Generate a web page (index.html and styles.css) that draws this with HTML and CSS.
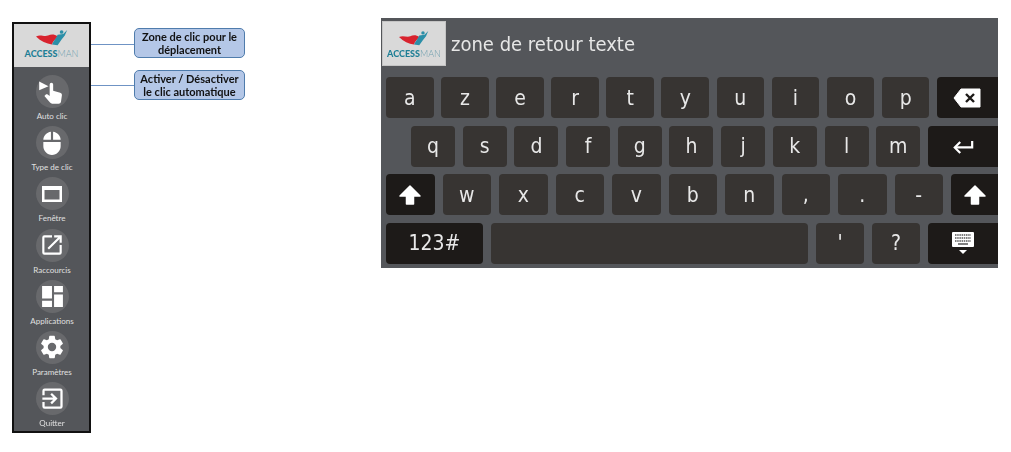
FILE: index.html
```html
<!DOCTYPE html>
<html lang="fr">
<head>
    <meta charset="utf-8">
    <title>AccessMan</title>
    <link rel="stylesheet" href="styles.css">
</head>
<body>
    <div class="page">
        <div class="leftcol">
            <div class="sidebar">
                <div class="sidelogo">
                    <svg class="logomark" viewBox="0 0 40 20" width="32" height="16">
                        <path d="M0 8 C6 5 10 9 15 7 C19 5 23 5 27 8 C24 12 21 14 20 18 C13 17 6 14 0 8Z" fill="#d8232e"/>
                        <path d="M27 6 L34 5 L39 0 L36 7 L32 12 L27 19 L20 18 C22 14 25 11 27 6Z" fill="#2b8fa8"/>
                        <circle cx="32" cy="2.500" r="2.300" fill="#2b8fa8"/>
                    </svg>
                    <div class="logotext"><b>ACCESS</b>MAN</div>
                </div>
                <div class="sideitem">
                    <div class="circle">
                        <svg viewBox="0 0 24 24" width="28" height="28">
                            <path d="M1 3 L9 7 L1 10.500Z" fill="#fff"/>
                            <path d="M10 5.500a1.500 1.500 0 0 1 3 0V11l6 1.600c1.200.4 1.600 1.200 1.500 2.200l-.8 5.500c-.2 1-1 1.700-2 1.700h-5.500c-.8 0-1.400-.3-1.900-.9L5.500 15.500l1-1.100c.5-.5 1.200-.5 1.800-.2L10 15.500Z" fill="#fff"/>
                        </svg>
                    </div>
                    <span>Auto clic</span>
                </div>
                <div class="sideitem">
                    <div class="circle">
                        <svg viewBox="0 0 24 24" width="26" height="26">
                            <path d="M13 1.500c3.900.5 7 3.800 7 7.500h-7zM11 1.500V9H4c0-3.700 3.100-7 7-7.500zM4 11h16v4c0 4.400-3.600 8-8 8s-8-3.600-8-8z" fill="#fff"/>
                        </svg>
                    </div>
                    <span>Type de clic</span>
                </div>
                <div class="sideitem">
                    <div class="circle">
                        <svg viewBox="0 0 24 24" width="24" height="24">
                            <path d="M2 4h20v16H2zM4.500 8v9.500h15V8z" fill="#fff" fill-rule="evenodd"/>
                        </svg>
                    </div>
                    <span>Fenêtre</span>
                </div>
                <div class="sideitem">
                    <div class="circle">
                        <svg viewBox="0 0 24 24" width="26" height="26">
                            <path d="M19 19H5V5h7V3H5a2 2 0 0 0-2 2v14a2 2 0 0 0 2 2h14a2 2 0 0 0 2-2v-7h-2zM14 3v2h3.600l-9.800 9.800 1.400 1.400L19 6.400V10h2V3z" fill="#fff"/>
                        </svg>
                    </div>
                    <span>Raccourcis</span>
                </div>
                <div class="sideitem">
                    <div class="circle">
                        <svg viewBox="0 0 24 24" width="25" height="25">
                            <path d="M2 2h9.500v12H2zM2 16h9.500v6H2zM13.500 2H22v6h-8.500zM13.500 10H22v12h-8.500z" fill="#fff"/>
                        </svg>
                    </div>
                    <span>Applications</span>
                </div>
                <div class="sideitem">
                    <div class="circle">
                        <svg viewBox="0 0 24 24" width="28" height="28">
                            <path d="M19.140 12.940c.04-.3.060-.61.060-.94s-.02-.64-.070-.94l2.030-1.580a.49.490 0 0 0 .12-.61l-1.920-3.320a.49.490 0 0 0-.59-.22l-2.390.96a7 7 0 0 0-1.620-.94l-.36-2.540a.48.480 0 0 0-.48-.41h-3.840a.48.480 0 0 0-.47.410l-.36 2.540c-.59.24-1.130.57-1.620.94l-2.390-.96a.49.490 0 0 0-.59.22L2.740 8.870a.48.480 0 0 0 .12.61l2.030 1.580c-.05.3-.09.63-.09.94s.02.64.070.94l-2.030 1.580a.49.490 0 0 0-.12.61l1.920 3.320c.12.22.37.290.59.220l2.390-.96c.5.380 1.030.7 1.620.94l.36 2.540c.05.240.240.410.480.410h3.840c.240 0 .440-.170.470-.410l.36-2.540c.59-.24 1.130-.56 1.620-.94l2.390.96c.22.080.47 0 .59-.22l1.920-3.320a.48.480 0 0 0-.12-.61zM12 15.600a3.600 3.600 0 1 1 0-7.200 3.600 3.600 0 0 1 0 7.200z" fill="#fff"/>
                        </svg>
                    </div>
                    <span>Paramètres</span>
                </div>
                <div class="sideitem">
                    <div class="circle">
                        <svg viewBox="0 0 24 24" width="27" height="27">
                            <path d="M10.090 15.590 11.500 17l5-5-5-5-1.410 1.410L12.670 11H3v2h9.670zM19 3H5a2 2 0 0 0-2 2v4h2V5h14v14H5v-4H3v4a2 2 0 0 0 2 2h14a2 2 0 0 0 2-2V5a2 2 0 0 0-2-2z" fill="#fff"/>
                        </svg>
                    </div>
                    <span>Quitter</span>
                </div>
            </div>
            <div class="notes">
                <div class="note note1"><i class="line"></i><div class="bubble">Zone de clic pour le déplacement</div></div>
                <div class="note note2"><i class="line"></i><div class="bubble">Activer / Désactiver le clic automatique</div></div>
            </div>
        </div>

        <div class="keyboard">
            <div class="kbtop">
                <div class="toplogo">
                    <svg class="logomark" viewBox="0 0 40 20" width="30" height="15">
                        <path d="M0 8 C6 5 10 9 15 7 C19 5 23 5 27 8 C24 12 21 14 20 18 C13 17 6 14 0 8Z" fill="#d8232e"/>
                        <path d="M27 6 L34 5 L39 0 L36 7 L32 12 L27 19 L20 18 C22 14 25 11 27 6Z" fill="#2b8fa8"/>
                        <circle cx="32" cy="2.500" r="2.300" fill="#2b8fa8"/>
                    </svg>
                    <div class="logotext"><b>ACCESS</b>MAN</div>
                </div>
                <div class="returntext">zone de retour texte</div>
            </div>
            <div class="row row1">
                <div class="key">a</div><div class="key">z</div><div class="key">e</div><div class="key">r</div><div class="key">t</div>
                <div class="key">y</div><div class="key">u</div><div class="key">i</div><div class="key">o</div><div class="key">p</div>
                <div class="key dark grow">
                    <svg viewBox="0 0 28 20" width="28" height="20"><path d="M8 1h19v18H8L1 10z" fill="#fff" stroke="#fff" stroke-linejoin="round"/><path d="M13 6l8 8M21 6l-8 8" stroke="#1d1a18" stroke-width="2.400"/></svg>
                </div>
            </div>
            <div class="row row2">
                <div class="key">q</div><div class="key">s</div><div class="key">d</div><div class="key">f</div><div class="key">g</div>
                <div class="key">h</div><div class="key">j</div><div class="key">k</div><div class="key">l</div><div class="key">m</div>
                <div class="key dark grow">
                    <svg viewBox="0 0 24 16" width="22" height="15"><path d="M22 2v7H4" fill="none" stroke="#fff" stroke-width="2.400"/><path d="M9 3L3 9l6 6" fill="none" stroke="#fff" stroke-width="2.400"/></svg>
                </div>
            </div>
            <div class="row row3">
                <div class="key dark">
                    <svg viewBox="0 0 24 22" width="24" height="22"><path d="M12 2L2 12h6.500v8h7v-8H22z" fill="#fff" stroke="#fff" stroke-width="1.500" stroke-linejoin="round"/></svg>
                </div>
                <div class="key">w</div><div class="key">x</div><div class="key">c</div><div class="key">v</div><div class="key">b</div>
                <div class="key">n</div><div class="key">,</div><div class="key">.</div><div class="key">-</div>
                <div class="key dark grow">
                    <svg viewBox="0 0 24 22" width="24" height="22"><path d="M12 2L2 12h6.500v8h7v-8H22z" fill="#fff" stroke="#fff" stroke-width="1.500" stroke-linejoin="round"/></svg>
                </div>
            </div>
            <div class="row row4">
                <div class="key dark num">123#</div>
                <div class="key space"></div>
                <div class="key">'</div>
                <div class="key">?</div>
                <div class="key dark grow">
                    <svg viewBox="0 0 24 24" width="24" height="24"><path d="M2 1h20a1 1 0 0 1 1 1v13a1 1 0 0 1-1 1H2a1 1 0 0 1-1-1V2a1 1 0 0 1 1-1z" fill="#fff"/><path d="M4 4h16M4 7h16M4 10h16" stroke="#555" stroke-width="1.500" stroke-dasharray="1.500 .7"/><path d="M7 13h10" stroke="#555" stroke-width="1.500"/><path d="M8 19h8l-4 4z" fill="#fff"/></svg>
                </div>
            </div>
        </div>
    </div>
</body>
</html>
```

FILE: styles.css
```css
* {
    margin: 0;
    box-sizing: border-box;
}

body {
    background: #fff;
    font-family: "Lato", "Liberation Sans", sans-serif;
}

.page {
    display: flex;
    padding: 18px 0 0 12px;
    height: 452px;
    overflow: hidden;
    filter: blur(0.35px);
}

.leftcol {
    display: flex;
    width: 369px;
    padding-top: 4px;
}

.sidebar {
    width: 79px;
    height: 411px;
    border: 2px solid #111;
    background: #54565a;
}

.sidelogo {
    height: 43px;
    background: #d9d9d9;
    display: flex;
    flex-direction: column;
    align-items: center;
    padding-top: 6px;
}

.logomark {
    display: block;
}

.logotext {
    font-size: 9px;
    line-height: 11px;
    margin-top: 2px;
    color: #6f9fae;
    font-weight: 300;
    white-space: nowrap;
}

.logotext b {
    color: #1f7f96;
    font-weight: 900;
}

.sideitem {
    height: 51.200px;
    display: flex;
    flex-direction: column;
    align-items: center;
    padding-top: 8px;
    margin-left: 1px;
}

.sideitem span {
    font-size: 8px;
    line-height: 11px;
    color: #e0e0e0;
    margin-top: 3px;
}

.circle {
    width: 33px;
    height: 33px;
    flex: none;
    border-radius: 50%;
    background: #68696c;
    display: flex;
    align-items: center;
    justify-content: center;
}

.notes {
    width: 154px;
}

.note {
    display: flex;
    align-items: center;
}

.note1 {
    margin-top: 6px;
}

.note2 {
    margin-top: 12px;
}

.line {
    width: 43px;
    height: 1px;
    background: #6f93c4;
}

.note1 .line {
    margin-top: 2px;
}

.bubble {
    width: 111px;
    height: 30px;
    border: 1px solid #4f7cac;
    border-radius: 5px;
    background: #b4c7e7;
    color: #111;
    font-size: 11px;
    font-weight: 700;
    line-height: 13px;
    text-align: center;
    padding: 1px 3px 0;
}

.keyboard {
    width: 617px;
    height: 250px;
    background: #54565a;
}

.kbtop {
    height: 59px;
    display: flex;
    padding: 3px 0 0 1px;
}

.toplogo {
    width: 64px;
    height: 45px;
    background: #d9d9d9;
    border: 1px solid #c4c4c4;
    display: flex;
    flex-direction: column;
    align-items: center;
    padding-top: 9px;
}

.returntext {
    color: #e6e6e6;
    font-family: "DejaVu Sans Condensed", "DejaVu Sans", sans-serif;
    font-size: 20px;
    line-height: 46px;
    margin-left: 5px;
}

.row {
    display: flex;
    height: 41px;
    margin-bottom: 7.600px;
    color: #e8e8e8;
    font-family: "DejaVu Sans Condensed", "DejaVu Sans", sans-serif;
    font-size: 21px;
}

.key {
    background: #373432;
    border-radius: 4px;
    display: flex;
    align-items: center;
    justify-content: center;
    flex: none;
}

.key.dark {
    background: #1d1a18;
}

.key.grow {
    flex: 1;
    border-radius: 4px 0 0 4px;
}

.row1 {
    padding-left: 5px;
    gap: 7.500px;
}

.row1 .key {
    width: 47.600px;
}

.row2 {
    padding-left: 30px;
    gap: 7.700px;
}

.row2 .key {
    width: 44px;
}

.row3 {
    padding-left: 5px;
    gap: 8px;
}

.row3 .key {
    width: 48.500px;
}

.row4 {
    padding-left: 5px;
    gap: 8px;
}

.row4 .key {
    width: 48px;
}

.row4 .key.num {
    width: 97px;
}

.row4 .key.space {
    width: 317px;
}

.row .key.grow {
    width: auto;
}
```
